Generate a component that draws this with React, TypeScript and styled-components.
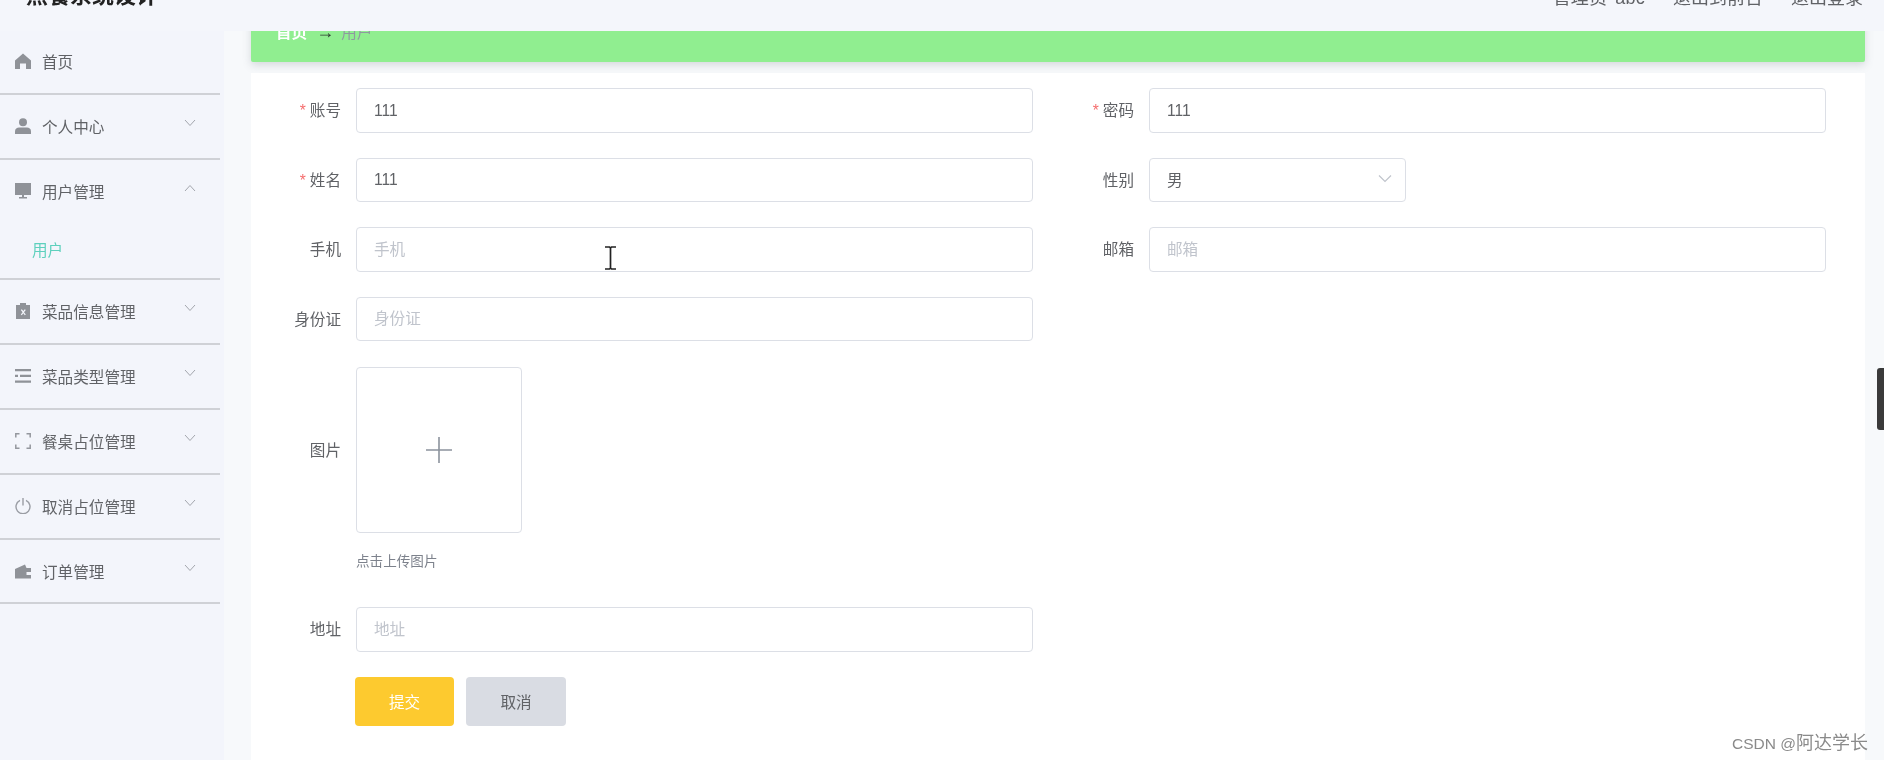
import React from 'react';
import styled, { createGlobalStyle } from 'styled-components';

const Global = createGlobalStyle`
  html, body { margin: 0; padding: 0; background: #f5f7fb; }
  * { box-sizing: border-box; }
  body { font-family: "Liberation Sans", "Noto Sans CJK SC", sans-serif; }
`;

const Page = styled.div`
  position: relative;
  width: 1884px;
  height: 760px;
  overflow: hidden;
  background: #f5f7fb;
  filter: blur(0.5px);
`;

const Header = styled.header`
  height: 31px;
  padding: 0 21px 0 26px;
  display: flex;
  justify-content: space-between;
  overflow: hidden;
  background: #f4f6fb;
`;

const Title = styled.div`
  margin-top: -19px;
  font-size: 22px;
  line-height: 30px;
  font-weight: 700;
  color: #222;
`;

const HeaderLinks = styled.div`
  margin-top: -17px;
  display: flex;
  gap: 28px;
  font-size: 18px;
  line-height: 30px;
  color: #606266;
`;

const AdminName = styled.span`
  word-spacing: 3px;
  letter-spacing: 0.2px;
`;

const Body = styled.div`
  height: 729px;
  display: flex;
`;

const Aside = styled.aside`
  width: 224px;
  flex: none;
  overflow: hidden;
  background: #f3f5fb;
`;

const Menu = styled.nav`
  width: 220px;
  margin-top: -1px;
`;

const MenuGroup = styled.div`
  border-bottom: 2px solid #cfd1d6;
  &:last-child > div { height: 61.5px; padding: 1px 15px 0; }
`;

const MenuTitle = styled.div`
  position: relative;
  height: 63px;
  padding: 0 15px 2px;
  display: flex;
  align-items: center;
  gap: 11px;
  font-size: 15.6px;
  color: #606266;
`;

const Arrow = styled.svg`
  position: absolute;
  right: 24px;
  top: 24px;
`;

const SubItem = styled.div`
  height: 55px;
  padding: 0 0 4px 32px;
  display: flex;
  align-items: center;
  font-size: 15.6px;
  color: #5ed0bd;
`;

const Icon = styled.svg`
  width: 16px;
  height: 16px;
  flex: none;
  fill: #8f9298;
`;

const Main = styled.main`
  flex: 1;
  min-width: 0;
  padding: 0 19px 0 27px;
  overflow: hidden;
  background: #f7f9fb;
`;

const Crumbs = styled.div`
  height: 62px;
  margin-top: -31px;
  padding: 22px 0 0 25px;
  display: flex;
  align-items: flex-start;
  gap: 9px;
  font-size: 15.6px;
  line-height: 22px;
  background: #90ee90;
  border-radius: 2px;
  box-shadow: 0 3px 8px rgba(90, 100, 110, 0.22);
`;

const CrumbHome = styled.span`
  font-weight: 700;
  color: #fff;
`;

const CrumbArrow = styled.span`
  width: 16px;
  margin-top: -1px;
  font-size: 18px;
  font-weight: 700;
  color: #2c3a30;
`;

const CrumbCurrent = styled.span`
  color: #8f9aa0;
`;

const Panel = styled.section`
  height: 700px;
  margin-top: 11px;
  padding: 15px 39px 0 0;
  display: grid;
  grid-template-columns: 782px 1fr;
  grid-auto-rows: min-content;
  row-gap: 25px;
  align-content: start;
  background: #fff;
`;

const Field = styled.div<{ $labelWidth: number; $column: number }>`
  grid-column: ${(p) => p.$column};
  display: grid;
  grid-template-columns: ${(p) => p.$labelWidth}px minmax(0, 1fr);
  column-gap: 14px;
  align-items: center;
`;

const Label = styled.label`
  padding: 0 1px 2px 0;
  text-align: right;
  font-size: 15.6px;
  color: #606266;
`;

const Star = styled.span`
  margin-right: 4px;
  color: #f56c6c;
`;

const TextInput = styled.input`
  width: 100%;
  height: 44.5px;
  padding: 1px 17px 0;
  border: 1.2px solid #dcdfe6;
  border-radius: 4px;
  outline: none;
  background: #fff;
  font-family: inherit;
  font-size: 15.6px;
  color: #606266;
  &::placeholder { color: #c0c4cc; opacity: 1; }
`;

const SelectBox = styled.div`
  width: 257px;
  height: 44.5px;
  padding: 0 13px 2px 17px;
  display: flex;
  align-items: center;
  justify-content: space-between;
  border: 1.2px solid #dcdfe6;
  border-radius: 4px;
  font-size: 15.6px;
  color: #606266;
`;

const UploadField = styled(Field)`
  grid-template-rows: 166px auto;
  margin-top: 1px;
`;

const UploadBox = styled.div`
  width: 166px;
  height: 166px;
  display: flex;
  align-items: center;
  justify-content: center;
  border: 1.2px solid #dcdfe6;
  border-radius: 4px;
`;

const Hint = styled.div`
  grid-column: 2;
  height: 49px;
  padding-top: 19px;
  font-size: 13.6px;
  line-height: 20px;
  color: #7d828c;
`;

const Actions = styled.div`
  grid-column: 1;
  padding-left: 104px;
  display: flex;
  gap: 12px;
`;

const Button = styled.button<{ $primary?: boolean }>`
  width: ${(p) => (p.$primary ? 99 : 100)}px;
  height: 49px;
  border: 0;
  border-radius: 4px;
  font-family: inherit;
  font-size: 15.6px;
  background: ${(p) => (p.$primary ? '#fdca2f' : '#d9dce3')};
  color: ${(p) => (p.$primary ? '#fff' : '#606266')};
`;

const Scrollbar = styled.div`
  position: absolute;
  right: 0;
  top: 368px;
  width: 7px;
  height: 62px;
  border-radius: 3px 0 0 3px;
  background: #3a3a3a;
`;

const Watermark = styled.div`
  position: absolute;
  right: 16px;
  top: 731px;
  font-size: 15.5px;
  line-height: 24px;
  color: #8a8a8a;
  white-space: nowrap;
  span { font-size: 18px; }
`;

const TextCursor = styled.svg`
  position: absolute;
  left: 604px;
  top: 246px;
`;

const Chevron = ({ up }: { up?: boolean }) => (
  <Arrow width="12" height="8" viewBox="0 0 12 8" fill="none" stroke="#a3a6ad" strokeWidth="1">
    <path d={up ? 'M1 7l5-5.5L11 7' : 'M1 1l5 5.5L11 1'} />
  </Arrow>
);

const icons: Record<string, React.ReactNode> = {
  home: <path d="M8 0.5L16 7.5V16H11V10.5H5V16H0V7.5Z" />,
  user: (
    <>
      <circle cx="8" cy="4.2" r="4" />
      <path d="M0 13.2C0 10.6 2 9.4 4 9.4H12C14 9.4 16 10.6 16 13.2V16H0Z" />
    </>
  ),
  monitor: <path d="M0 0H16V12H9V14H12V15.5H4V14H7V12H0Z" />,
  clipboard: (
    <path
      fillRule="evenodd"
      d="M1 2H5V0H11V2H15V16H1ZM5.8 7L7.6 9.2L5.8 11.4L6.8 12.2L8.3 10.3L9.8 12.2L10.8 11.4L9 9.2L10.8 7L9.8 6.2L8.3 8.1L6.8 6.2Z"
    />
  ),
  lines: <path d="M0 1H16V3.2H0ZM0 6.8H3V9H0ZM5 6.8H16V9H5ZM0 12.6H16V14.8H0Z" />,
  wallet: <path fillRule="evenodd" d="M0 6L10 1.5L11.5 5H16V9H11.5V12H16V15.5H0Z" />,
};

const SvgIcon = ({ name }: { name: string }) => <Icon viewBox="0 0 16 16">{icons[name]}</Icon>;

const FullScreenIcon = () => (
  <Icon viewBox="0 0 16 16" style={{ fill: 'none' }} stroke="#94979e" strokeWidth="1.5">
    <path d="M4.5 0.8H0.8V4.5M11.5 0.8H15.2V4.5M0.8 11.5V15.2H4.5M15.2 11.5V15.2H11.5" />
  </Icon>
);

const PowerIcon = () => (
  <Icon viewBox="0 0 16 16" style={{ fill: 'none' }} stroke="#9a9da4" strokeWidth="1.4">
    <path d="M5 2.4A7 7 0 1 0 11 2.4M8 0V7.5" />
  </Icon>
);

const menu = [
  { label: '菜品信息管理', icon: <SvgIcon name="clipboard" /> },
  { label: '菜品类型管理', icon: <SvgIcon name="lines" /> },
  { label: '餐桌占位管理', icon: <FullScreenIcon /> },
  { label: '取消占位管理', icon: <PowerIcon /> },
  { label: '订单管理', icon: <SvgIcon name="wallet" /> },
];

const Row = ({ label, value, required, column = 1 }: { label: string; value?: string; required?: boolean; column?: number }) => (
  <Field $labelWidth={column === 1 ? 91 : 102} $column={column}>
    <Label>
      {required && <Star>*</Star>}
      {label}
    </Label>
    <TextInput readOnly value={value ?? ''} placeholder={label} />
  </Field>
);

export default function App() {
  return (
    <Page>
      <Global />
      <Header>
        <Title>点餐系统设计</Title>
        <HeaderLinks>
          <AdminName>管理员 abc</AdminName>
          <span>退出到前台</span>
          <span>退出登录</span>
        </HeaderLinks>
      </Header>
      <Body>
        <Aside>
          <Menu>
            <MenuGroup>
              <MenuTitle>
                <SvgIcon name="home" />
                首页
              </MenuTitle>
            </MenuGroup>
            <MenuGroup>
              <MenuTitle>
                <SvgIcon name="user" />
                个人中心
                <Chevron />
              </MenuTitle>
            </MenuGroup>
            <MenuGroup>
              <MenuTitle>
                <SvgIcon name="monitor" />
                用户管理
                <Chevron up />
              </MenuTitle>
              <SubItem>用户</SubItem>
            </MenuGroup>
            {menu.map((m) => (
              <MenuGroup key={m.label}>
                <MenuTitle>
                  {m.icon}
                  {m.label}
                  <Chevron />
                </MenuTitle>
              </MenuGroup>
            ))}
          </Menu>
        </Aside>
        <Main>
          <Crumbs>
            <CrumbHome>首页</CrumbHome>
            <CrumbArrow>→</CrumbArrow>
            <CrumbCurrent>用户</CrumbCurrent>
          </Crumbs>
          <Panel>
            <Row label="账号" value="111" required />
            <Row label="密码" value="111" required column={2} />
            <Row label="姓名" value="111" required />
            <Field $labelWidth={102} $column={2}>
              <Label>性别</Label>
              <SelectBox>
                男
                <svg width="14" height="9" viewBox="0 0 14 9" fill="none" stroke="#c0c4cc" strokeWidth="1.2">
                  <path d="M1 1.5l6 6 6-6" />
                </svg>
              </SelectBox>
            </Field>
            <Row label="手机" />
            <Row label="邮箱" column={2} />
            <Row label="身份证" />
            <UploadField $labelWidth={91} $column={1}>
              <Label>图片</Label>
              <UploadBox>
                <svg width="26" height="26" viewBox="0 0 26 26" fill="none" stroke="#8c939d" strokeWidth="1.6">
                  <path d="M13 0V26M0 13H26" />
                </svg>
              </UploadBox>
              <Hint>点击上传图片</Hint>
            </UploadField>
            <Row label="地址" />
            <Actions>
              <Button $primary>提交</Button>
              <Button>取消</Button>
            </Actions>
          </Panel>
        </Main>
      </Body>
      <Scrollbar />
      <TextCursor width="13" height="24" viewBox="0 0 13 24" fill="none" stroke="#222" strokeWidth="1.7">
        <path d="M1 1H5.5L6.5 2L7.5 1H12M6.5 2V22M1 23H5.5L6.5 22L7.5 23H12" />
      </TextCursor>
      <Watermark>
        CSDN @<span>阿达学长</span>
      </Watermark>
    </Page>
  );
}
